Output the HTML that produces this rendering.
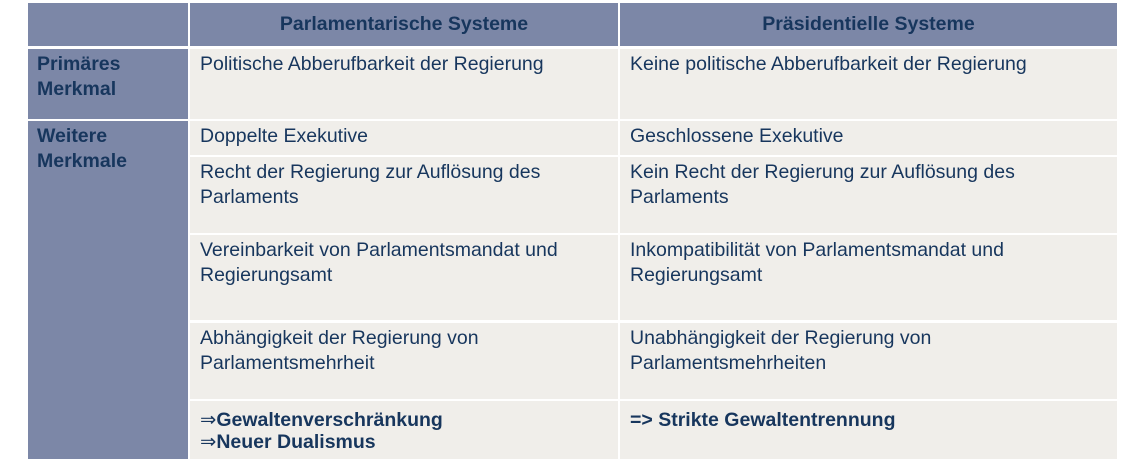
<!DOCTYPE html>
<html><head><meta charset="utf-8"><style>
body{margin:0;width:1138px;height:459px;background:#fff;position:relative;overflow:hidden;font-family:"Liberation Sans",Arial,sans-serif;color:#17365d;}
.c{position:absolute;box-sizing:border-box;font-size:19.5px;line-height:25px;padding:3px 10px;}
.h{background:#7c87a7;font-weight:bold;text-align:center;padding-top:9px;}
.l{background:#7c87a7;font-weight:bold;}
.b{background:#f0eeea;}
.bold{font-weight:bold;}
</style></head><body>
<div class="c h" style="left:28px;top:3px;width:160px;height:43px"></div>
<div class="c h" style="left:190px;top:3px;width:428px;height:43px">Parlamentarische Systeme</div>
<div class="c h" style="left:620px;top:3px;width:497px;height:43px">Präsidentielle Systeme</div>

<div class="c l" style="left:28px;top:49px;width:160px;height:70px;padding-left:9px">Primäres<br>Merkmal</div>
<div class="c b" style="left:190px;top:49px;width:428px;height:70px">Politische Abberufbarkeit der Regierung</div>
<div class="c b" style="left:620px;top:49px;width:497px;height:70px">Keine politische Abberufbarkeit der Regierung</div>

<div class="c l" style="left:28px;top:121px;width:160px;height:338px;padding-left:9px">Weitere<br>Merkmale</div>

<div class="c b" style="left:190px;top:121px;width:428px;height:34px">Doppelte Exekutive</div>
<div class="c b" style="left:620px;top:121px;width:497px;height:34px">Geschlossene Exekutive</div>

<div class="c b" style="left:190px;top:157px;width:428px;height:76px">Recht der Regierung zur Auflösung des<br>Parlaments</div>
<div class="c b" style="left:620px;top:157px;width:497px;height:76px">Kein Recht der Regierung zur Auflösung des<br>Parlaments</div>

<div class="c b" style="left:190px;top:235px;width:428px;height:85px">Vereinbarkeit von Parlamentsmandat und<br>Regierungsamt</div>
<div class="c b" style="left:620px;top:235px;width:497px;height:85px">Inkompatibilität von Parlamentsmandat und<br>Regierungsamt</div>

<div class="c b" style="left:190px;top:323px;width:428px;height:76px">Abhängigkeit der Regierung von<br>Parlamentsmehrheit</div>
<div class="c b" style="left:620px;top:323px;width:497px;height:76px">Unabhängigkeit der Regierung von<br>Parlamentsmehrheiten</div>

<div class="c b bold" style="left:190px;top:401px;width:428px;height:58px;line-height:22px;padding-top:8px"><span style="font-weight:normal">⇒</span>Gewaltenverschränkung<br><span style="font-weight:normal">⇒</span>Neuer Dualismus</div>
<div class="c b bold" style="left:620px;top:401px;width:497px;height:58px;line-height:22px;padding-top:8px">=&gt; Strikte Gewaltentrennung</div>
</body></html>
